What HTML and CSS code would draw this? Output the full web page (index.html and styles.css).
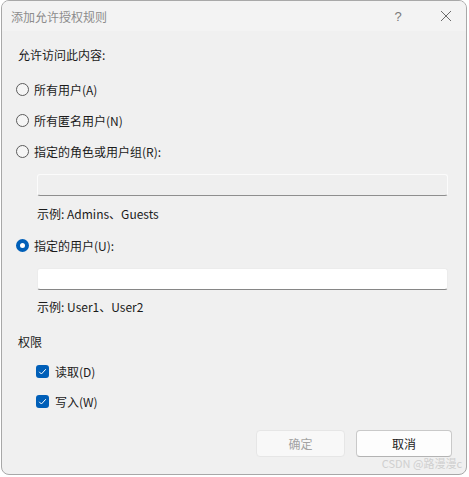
FILE: index.html
```html
<!DOCTYPE html>
<html lang="zh-CN">
<head>
  <meta charset="UTF-8" />
  <meta name="viewport" content="width=device-width, initial-scale=1.0"/>
  <title>添加允许授权规则</title>
  <link rel="stylesheet" href="styles.css">
</head>
<body>
  <div class="window">
    <div class="titlebar">
      <span class="title">添加允许授权规则</span>
      <span class="help">?</span>
      <span class="close">
        <svg width="12" height="12" viewBox="0 0 12 12">
          <path d="M1 1 L11 11 M11 1 L1 11" stroke="#6b6b6b" stroke-width="1" fill="none"/>
        </svg>
      </span>
    </div>

    <div class="content">
      <div class="heading">允许访问此内容:</div>

      <label class="option"><span class="radio"></span>所有用户(A)</label>
      <label class="option"><span class="radio"></span>所有匿名用户(N)</label>
      <label class="option"><span class="radio"></span>指定的角色或用户组(R):</label>

      <div class="textbox disabled"></div>
      <div class="hint">示例: Admins、Guests</div>

      <label class="option option-gap"><span class="radio checked"></span>指定的用户(U):</label>

      <div class="textbox"></div>
      <div class="hint hint-gap">示例: User1、User2</div>

      <div class="heading heading-gap">权限</div>

      <label class="check-row">
        <span class="checkbox">
          <svg width="9" height="9" viewBox="0 0 9 9"><path d="M1.2 4.8 L3.4 7 L7.8 2.2" stroke="#fff" stroke-width="1" fill="none"/></svg>
        </span>读取(D)
      </label>
      <label class="check-row">
        <span class="checkbox">
          <svg width="9" height="9" viewBox="0 0 9 9"><path d="M1.2 4.8 L3.4 7 L7.8 2.2" stroke="#fff" stroke-width="1" fill="none"/></svg>
        </span>写入(W)
      </label>

      <div class="buttons">
        <button class="btn btn-ok" disabled>确定</button>
        <button class="btn btn-cancel">取消</button>
      </div>
    </div>

    <div class="watermark">CSDN @路漫漫c</div>
  </div>
</body>
</html>
```

FILE: styles.css
```css
body {
  margin: 0;
  background: #ffffff;
  font-family: "Noto Sans CJK SC", "Noto Sans", sans-serif;
  font-size: 12px;
  color: #1b1b1b;
}

.window {
  position: relative;
  box-sizing: border-box;
  width: 466px;
  height: 475px;
  margin-left: 1px;
  background: #f0f0f0;
  border: 1px solid #a8a8a8;
  border-radius: 8px;
  overflow: hidden;
}

.titlebar {
  display: flex;
  align-items: center;
  height: 30px;
  padding-left: 9px;
  background: #f3f3f3;
}

.title {
  flex: 1;
  color: #8c8c8c;
  font-size: 12px;
}

.help {
  width: 30px;
  text-align: center;
  color: #7a7a7a;
  font-family: "Liberation Sans", sans-serif;
  font-size: 13px;
  margin-right: 18px;
}

.close {
  display: flex;
  justify-content: center;
  width: 30px;
  margin-right: 5px;
}

.content {
  display: flex;
  flex-direction: column;
  padding: 0 18px 0 16px;
}

.heading {
  line-height: 20px;
  margin-top: 14px;
}

.heading-gap {
  margin-top: 15px;
}

.option {
  display: flex;
  align-items: center;
  height: 31px;
  margin-left: -2px;
}

.content .heading + .option {
  margin-top: 9px;
}

.option-gap {
  margin-top: 6px;
}

.radio {
  box-sizing: border-box;
  width: 13px;
  height: 13px;
  border: 1px solid #5c5c5c;
  border-radius: 50%;
  background: #f5f5f5;
  margin-right: 5px;
}

.radio.checked {
  border: 4px solid #005fb8;
  background: #ffffff;
}

.textbox {
  box-sizing: border-box;
  height: 22px;
  margin: 7px 0 0 19px;
  background: #ffffff;
  border: 1px solid #ececec;
  border-bottom: 1px solid #868686;
  border-radius: 3px;
}

.textbox.disabled {
  background: #efefef;
  border-color: #fbfbfb;
  border-bottom-color: #8e8e8e;
}

.hint {
  line-height: 20px;
  margin: 8px 0 0 19px;
}

.hint-gap {
  margin-top: 7px;
}

.check-row {
  display: flex;
  align-items: center;
  height: 30px;
  margin-left: 18px;
}

.heading-gap + .check-row {
  margin-top: 4px;
}

.checkbox {
  display: flex;
  align-items: center;
  justify-content: center;
  width: 13px;
  height: 13px;
  border-radius: 3px;
  background: #005fb8;
  margin-right: 6px;
}

.buttons {
  display: flex;
  justify-content: flex-end;
  gap: 11px;
  margin: 14px -4px 0 0;
}

.btn {
  box-sizing: border-box;
  height: 27px;
  border-radius: 4px;
  font-family: inherit;
  font-size: 12px;
}

.btn-ok {
  width: 89px;
  background: #f8f8f8;
  border: 1px solid #e6e6e6;
  color: #a3a3a3;
}

.btn-cancel {
  width: 96px;
  background: #fdfdfd;
  border: 1px solid #c9c9c9;
  border-bottom-color: #b3b3b3;
  color: #1b1b1b;
}

.watermark {
  position: absolute;
  right: 4px;
  bottom: 3px;
  color: #cfcfcf;
  font-size: 11px;
}
```
